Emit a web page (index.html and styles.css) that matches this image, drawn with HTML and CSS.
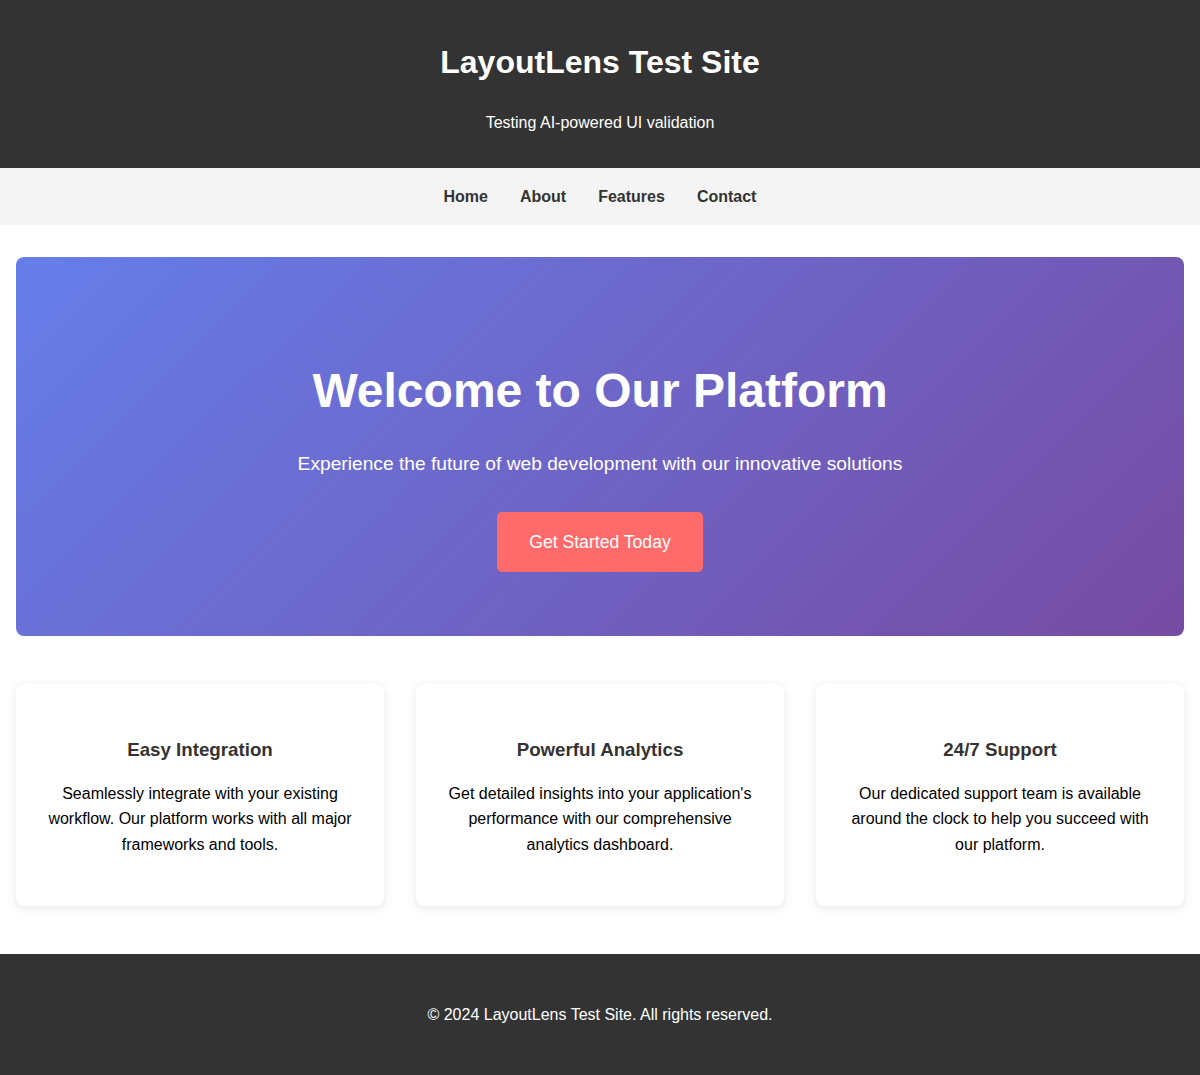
FILE: index.html
```html
<!DOCTYPE html>
<html lang="en">
<head>
<meta charset="UTF-8">
<title>LayoutLens Test Site</title>
<link rel="stylesheet" href="styles.css">
</head>
<body>
<header class="site-header">
  <h1 class="site-title">LayoutLens Test Site</h1>
  <p class="site-tagline">Testing AI-powered UI validation</p>
</header>
<nav class="site-nav">
  <a href="#" class="nav-link">Home</a>
  <a href="#" class="nav-link">About</a>
  <a href="#" class="nav-link">Features</a>
  <a href="#" class="nav-link">Contact</a>
</nav>
<main class="main">
  <section class="hero">
    <h2 class="hero-title">Welcome to Our Platform</h2>
    <p class="hero-text">Experience the future of web development with our innovative solutions</p>
    <a href="#" class="hero-btn">Get Started Today</a>
  </section>
  <section class="features">
    <div class="card">
      <h3 class="card-title">Easy Integration</h3>
      <p class="card-text">Seamlessly integrate with your existing workflow. Our platform works with all major frameworks and tools.</p>
    </div>
    <div class="card">
      <h3 class="card-title">Powerful Analytics</h3>
      <p class="card-text">Get detailed insights into your application's performance with our comprehensive analytics dashboard.</p>
    </div>
    <div class="card">
      <h3 class="card-title">24/7 Support</h3>
      <p class="card-text">Our dedicated support team is available around the clock to help you succeed with our platform.</p>
    </div>
  </section>
</main>
<footer class="site-footer">
  <p class="footer-text">&copy; 2024 LayoutLens Test Site. All rights reserved.</p>
</footer>
</body>
</html>
```

FILE: styles.css
```css
* { box-sizing: border-box; }
body {
  margin: 0;
  font-family: "Liberation Sans", Arial, sans-serif;
  line-height: 1.6;
  color: #000;
  background: #fff;
}
.site-header {
  background: #333;
  color: #fff;
  text-align: center;
  padding: 1rem;
}
.site-title {
  font-size: 2rem;
  margin: 21.44px 0;
}
.site-tagline {
  margin: 0 0 16px;
}
.site-nav {
  background: #f4f4f4;
  padding: 1rem;
  display: flex;
  justify-content: center;
  gap: 32px;
}
.nav-link {
  color: #333;
  font-weight: bold;
  text-decoration: none;
}
.main {
  padding: 2rem 1rem;
}
.hero {
  background: linear-gradient(135deg, #667eea 0%, #764ba2 100%);
  color: #fff;
  text-align: center;
  padding: 4rem 2rem;
  border-radius: 8px;
}
.hero-title {
  font-size: 3rem;
  margin: 32px 0 19px;
}
.hero-text {
  font-size: 1.2rem;
  margin: 0 0 2rem;
}
.hero-btn {
  display: inline-block;
  background: #ff6b6b;
  color: #fff;
  text-decoration: none;
  font-size: 1.1rem;
  padding: 1rem 2rem;
  border-radius: 5px;
  vertical-align: top;
}
.features {
  margin: 3rem 0 1rem;
  display: grid;
  grid-template-columns: repeat(3, 1fr);
  gap: 2rem;
}
.card {
  background: #fff;
  padding: 2rem;
  border-radius: 8px;
  box-shadow: 0 2px 10px rgba(0,0,0,0.1);
  text-align: center;
}
.card-title {
  color: #333;
  font-size: 1.17em;
  margin: 18.72px 0 16px;
}
.card-text {
  margin: 0 0 17px;
}
.site-footer {
  background: #333;
  color: #fff;
  text-align: center;
  padding: 2rem;
}
.footer-text {
  margin: 16px 0;
}
```
